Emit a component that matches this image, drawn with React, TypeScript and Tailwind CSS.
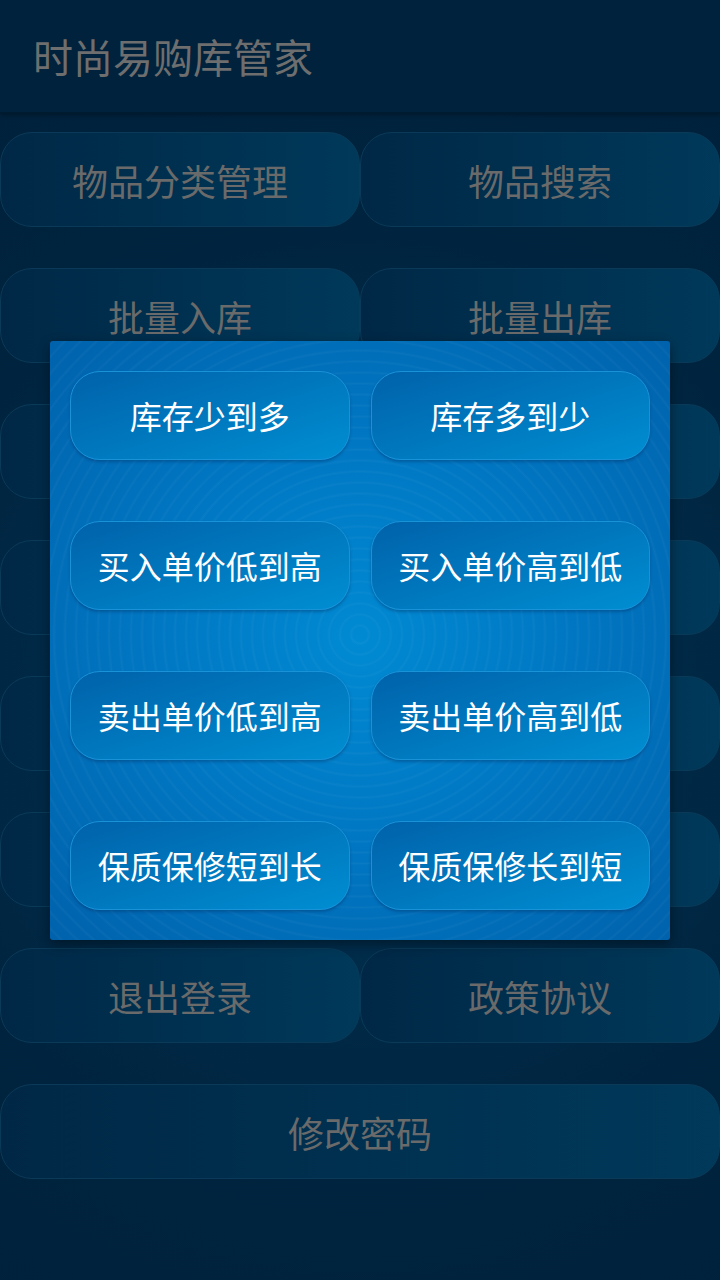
import React from "react";

const font = { fontFamily: '"Noto Sans CJK SC", "Noto Sans", sans-serif' };

// rows 3-6 sit behind the sort dialog, their labels are not visible
const menuRows: string[][] = [
  ["物品分类管理", "物品搜索"],
  ["批量入库", "批量出库"],
  ["", ""],
  ["", ""],
  ["", ""],
  ["", ""],
  ["退出登录", "政策协议"],
  ["修改密码"],
];

const sortOptions = [
  "库存少到多",
  "库存多到少",
  "买入单价低到高",
  "买入单价高到低",
  "卖出单价低到高",
  "卖出单价高到低",
  "保质保修短到长",
  "保质保修长到短",
];

function MenuButton({ label }: { label: string }) {
  return (
    <button className="flex h-[95px] flex-1 items-center justify-center rounded-[32px] border border-[#0a3a58] bg-gradient-to-r from-[#002846] to-[#00395a] text-[36px] text-[#6a6a6a]">
      {label}
    </button>
  );
}

export default function App() {
  return (
    <div
      className="relative min-h-[1280px] w-[720px] overflow-hidden bg-[#00233e] bg-[radial-gradient(circle_at_50%_55%,#013456_0%,#00243f_60%,#00203a_100%)]"
      style={font}
    >
      {/* Header */}
      <header className="flex h-[113px] items-center border-b border-[#001a30] bg-[#00223c] px-[33px] shadow-[0_2px_4px_rgba(0,0,0,0.3)]">
        <h1 className="text-[40px] leading-none text-[#6e6e6e]">时尚易购库管家</h1>
      </header>

      {/* Menu */}
      <div className="flex flex-col gap-[41px] pt-[19px]">
        {menuRows.map((row, i) => (
          <div key={i} className="flex">
            {row.map((label, j) => (
              <MenuButton key={j} label={label} />
            ))}
          </div>
        ))}
      </div>

      {/* Sort dialog */}
      <div className="absolute inset-0 flex items-center justify-center">
        <div className="relative w-[620px] overflow-hidden rounded-[3px] bg-[radial-gradient(ellipse_at_50%_50%,#008ad2_0%,#0078c4_45%,#0062ac_100%)] shadow-[0_4px_12px_rgba(0,0,0,0.4)]">
          <div className="pointer-events-none absolute inset-0 bg-[repeating-radial-gradient(circle_at_50%_49%,rgba(255,255,255,0)_0px,rgba(255,255,255,0)_7px,rgba(255,255,255,0.035)_9px,rgba(255,255,255,0)_11px)]" />
          <div className="relative grid grid-cols-2 gap-x-[21px] gap-y-[61px] px-5 py-[30px]">
            {sortOptions.map((opt) => (
              <button
                key={opt}
                className="flex h-[89px] items-center justify-center rounded-[30px] border border-[#1a92d8] bg-gradient-to-br from-[#0062aa] to-[#008ed2] text-[32px] text-white shadow-[0_2px_3px_rgba(0,40,90,0.35)]"
              >
                {opt}
              </button>
            ))}
          </div>
        </div>
      </div>
    </div>
  );
}
